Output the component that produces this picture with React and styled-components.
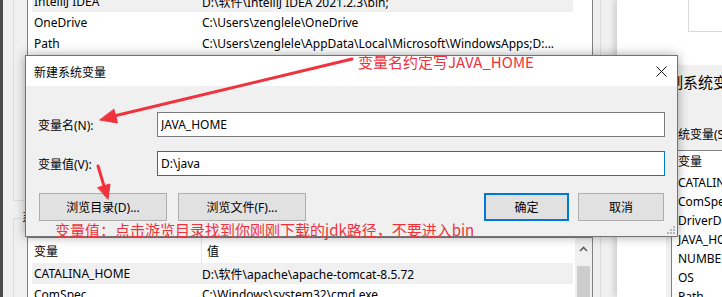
import React from 'react';
import styled, { createGlobalStyle } from 'styled-components';

const UI_FONT = '"Noto Sans", "Noto Sans CJK SC", sans-serif';
const CJK_FONT = '"Noto Sans CJK SC", "Noto Sans", sans-serif';
const RED = '#f0323c';

const GlobalStyle = createGlobalStyle`
  body {
    margin: 0;
    background: #4b4b4b;
  }
`;

const Desktop = styled.div`
  position: relative;
  width: 722px;
  height: 297px;
  overflow: hidden;
  background: #4b4b4b;
  font-family: ${UI_FONT};
  font-size: 12px;
  color: #000;
`;

/* ---------- back window: environment variables ---------- */

const BackWindow = styled.div`
  position: absolute;
  left: 3px;
  top: -60px;
  width: 614px;
  height: 357px;
  box-sizing: border-box;
  padding: 0 16px 0 10px;
  background: #f0f0f0;
  display: flex;
  flex-direction: column;
`;

const UserGroup = styled.div`
  height: 261px;
  flex-shrink: 0;
  box-sizing: border-box;
  border: 1px solid #dcdcdc;
  border-top: none;
  padding: 24px 7px 0 13px;
  display: flex;
  flex-direction: column;
`;

const GroupHead = styled.div`
  display: flex;
  align-items: center;
  flex-shrink: 0;
  height: 16px;
  margin-top: 9px;
`;

const Tick = styled.div`
  width: 8px;
  height: 8px;
  align-self: flex-end;
  border-top: 1px solid #dcdcdc;
  border-left: 1px solid #dcdcdc;
  box-sizing: border-box;
`;

const Legend = styled.span`
  padding: 0 2px 0 1px;
  white-space: nowrap;
  line-height: 16px;
`;

const Rule = styled.div`
  flex: 1;
  height: 1px;
  background: #dcdcdc;
`;

const SystemGroup = styled.div`
  flex: 1;
  min-height: 0;
  overflow: hidden;
  display: flex;
  flex-direction: column;
  border-left: 1px solid #dcdcdc;
  border-right: 1px solid #dcdcdc;
  padding: 11px 7px 0 13px;
`;

const List = styled.div`
  background: #fff;
  border: 1px solid #828282;
  display: flex;
  flex-shrink: 0;
  height: ${p => p.h}px;
`;

const ListMain = styled.div`
  flex: 1;
  display: flex;
  flex-direction: column;
  min-width: 0;
`;

const ListHeader = styled.div`
  display: flex;
  align-items: center;
  height: ${p => p.h}px;
  flex-shrink: 0;
  margin-left: 4px;
  padding-left: 2px;
`;

const HeadCell = styled.div`
  width: ${p => (p.first ? '161px' : 'auto')};
  padding-right: ${p => (p.first ? '6px' : 0)};
  border-right: ${p => (p.first ? '1px solid #e5e5e5' : 'none')};
  margin-right: ${p => (p.first ? '5px' : 0)};
  height: 100%;
  display: flex;
  align-items: center;
  white-space: nowrap;
`;

const Row = styled.div`
  display: flex;
  align-items: center;
  flex-shrink: 0;
  height: 21px;
  width: 541px;
  margin-left: 4px;
  padding-left: 2px;
  box-sizing: border-box;
  background: ${p => (p.selected ? '#f0f0f0' : 'transparent')};
`;

const Cell = styled.div`
  width: ${p => (p.first ? '168px' : 'auto')};
  flex: ${p => (p.first ? 'none' : 1)};
  white-space: nowrap;
  overflow: hidden;
`;

const ScrollBar = styled.div`
  width: 17px;
  background: #f0f0f0;
  display: flex;
  flex-direction: column;
  align-items: center;
`;

const ScrollButton = styled.div`
  height: 22px;
  display: flex;
  align-items: center;
  justify-content: center;
`;

const Thumb = styled.div`
  width: 13px;
  flex: 1;
  margin-top: 6px;
  background: #cdcdcd;
`;

const Spacer = styled.div`
  width: 18px;
`;

/* ---------- right window ---------- */

const RightWindow = styled.div`
  position: absolute;
  left: 617px;
  top: 0;
  width: 110px;
  height: 297px;
  background: #fff;
  box-shadow: -3px 0 6px rgba(0, 0, 0, 0.14);
  display: flex;
`;

const RightMargin = styled.div`
  width: 49px;
  flex-shrink: 0;
`;

const RightPanel = styled.div`
  flex: 1;
  display: flex;
  flex-direction: column;
  min-width: 0;
`;

const RightTop = styled.div`
  height: 65px;
  flex-shrink: 0;
`;

const PreviewBox = styled.div`
  margin: -1px 0 0 22px;
  height: 33px;
  border: 1px solid #dadada;
  box-sizing: border-box;
  background: #fff;
`;

const RightBody = styled.div`
  flex: 1;
  background: #f0f0f0;
  padding-top: 7px;
  display: flex;
  flex-direction: column;
`;

const RightTitle = styled.div`
  font-family: ${CJK_FONT};
  font-size: 15px;
  line-height: 20px;
  padding-left: 2px;
  white-space: nowrap;
`;

const RightLabel = styled.div`
  margin-top: 35px;
  line-height: 16px;
  white-space: nowrap;
`;

const SideList = styled.div`
  margin: 7px 0 0 5px;
  flex: 1;
  background: #fff;
  border-top: 1px solid #828282;
  border-left: 1px solid #828282;
  padding-left: 6px;
`;

const SideHead = styled.div`
  height: 22px;
  line-height: 22px;
  white-space: nowrap;
`;

const SideRow = styled.div`
  height: 19px;
  line-height: 19px;
  white-space: nowrap;
`;

/* ---------- dialog ---------- */

const Dialog = styled.div`
  position: absolute;
  left: 25px;
  top: 55px;
  width: 653px;
  height: 182px;
  box-sizing: border-box;
  border: 1px solid #737373;
  background: #f0f0f0;
  box-shadow: 0 0 10px rgba(0, 0, 0, 0.35);
  display: flex;
  flex-direction: column;
`;

const TitleBar = styled.div`
  height: 30px;
  background: #fff;
  display: flex;
  align-items: center;
  justify-content: space-between;
  padding-left: 8px;
`;

const TitleText = styled.span`
  font-family: ${CJK_FONT};
  font-size: 12px;
`;

const CloseButton = styled.div`
  width: 32px;
  height: 30px;
  display: flex;
  align-items: center;
  justify-content: center;
`;

const DialogBody = styled.div`
  padding: 26px 12px 0;
  display: flex;
  flex-direction: column;
`;

const Field = styled.div`
  display: flex;
  align-items: center;
  height: 25px;
  & + & {
    margin-top: 14px;
  }
`;

const FieldLabel = styled.label`
  width: 119px;
  flex-shrink: 0;
  white-space: nowrap;
`;

const TextBox = styled.input`
  width: 508px;
  height: 25px;
  box-sizing: border-box;
  border: 1px solid ${p => (p.focused ? '#0078d7' : '#7a7a7a')};
  padding: 0 3px;
  margin: 0;
  font-family: ${UI_FONT};
  font-size: 12px;
  color: #000;
  background: #fff;
  outline: none;
`;

const ButtonRow = styled.div`
  margin-top: 17px;
  display: flex;
  justify-content: space-between;
  padding: 0 1px;
`;

const ButtonGroup = styled.div`
  display: flex;
  gap: ${p => p.gap}px;
`;

const Button = styled.button`
  width: ${p => p.w}px;
  height: 28px;
  box-sizing: border-box;
  margin: 0;
  padding: 0;
  background: #e1e1e1;
  border: ${p => (p.primary ? '2px solid #0078d7' : '1px solid #adadad')};
  font-family: ${UI_FONT};
  font-size: 12px;
  color: #000;
`;

const Grip = styled.svg`
  position: absolute;
  right: 2px;
  bottom: 2px;
`;

/* ---------- annotations ---------- */

const Note = styled.div`
  position: absolute;
  left: ${p => p.x}px;
  top: ${p => p.y}px;
  font-family: ${CJK_FONT};
  font-size: 15px;
  line-height: 18px;
  color: ${RED};
  white-space: nowrap;
`;

const Arrows = styled.svg`
  position: absolute;
  left: 0;
  top: 0;
  pointer-events: none;
`;

const userVars = [
  ['IntelliJ IDEA', 'D:\\软件\\IntelliJ IDEA 2021.2.3\\bin;', true],
  ['OneDrive', 'C:\\Users\\zenglele\\OneDrive'],
  ['Path', 'C:\\Users\\zenglele\\AppData\\Local\\Microsoft\\WindowsApps;D:...'],
  ['TEMP', 'C:\\Users\\zenglele\\AppData\\Local\\Temp'],
  ['TMP', 'C:\\Users\\zenglele\\AppData\\Local\\Temp'],
];

const sysVars = [
  ['CATALINA_HOME', 'D:\\软件\\apache\\apache-tomcat-8.5.72', true],
  ['ComSpec', 'C:\\Windows\\system32\\cmd.exe'],
  ['DriverData', 'C:\\Windows\\System32\\Drivers\\DriverData'],
];

const sideVars = ['CATALINA_HOME', 'ComSpec', 'DriverData', 'JAVA_HOME', 'NUMBER_OF_PROCESSORS', 'OS', 'Path'];

export default function App() {
  return (
    <>
      <GlobalStyle />
      <Desktop>
        <BackWindow>
          <UserGroup>
            <List h={200}>
              <ListMain>
                <ListHeader h={26}>
                  <HeadCell first>变量</HeadCell>
                  <HeadCell>值</HeadCell>
                </ListHeader>
                {userVars.map(([k, v, sel]) => (
                  <Row key={k} selected={sel}>
                    <Cell first>{k}</Cell>
                    <Cell>{v}</Cell>
                  </Row>
                ))}
              </ListMain>
              <Spacer />
            </List>
          </UserGroup>

          <GroupHead>
            <Tick />
            <Legend>系统变量(S)</Legend>
            <Rule />
          </GroupHead>
          <SystemGroup>
            <List h={120}>
              <ListMain>
                <ListHeader h={25}>
                  <HeadCell first>变量</HeadCell>
                  <HeadCell>值</HeadCell>
                </ListHeader>
                {sysVars.map(([k, v, sel]) => (
                  <Row key={k} selected={sel}>
                    <Cell first>{k}</Cell>
                    <Cell>{v}</Cell>
                  </Row>
                ))}
              </ListMain>
              <ScrollBar>
                <ScrollButton>
                  <svg width="9" height="6" viewBox="0 0 9 6">
                    <path d="M1 5 L4.5 1.5 L8 5" fill="none" stroke="#606060" strokeWidth="1.6" />
                  </svg>
                </ScrollButton>
                <Thumb />
              </ScrollBar>
            </List>
          </SystemGroup>
        </BackWindow>

        <RightWindow>
          <RightMargin />
          <RightPanel>
            <RightTop>
              <PreviewBox />
            </RightTop>
            <RightBody>
              <RightTitle>制系统变量</RightTitle>
              <RightLabel>系统变量(S)</RightLabel>
              <SideList>
                <SideHead>变量</SideHead>
                {sideVars.map(k => (
                  <SideRow key={k}>{k}</SideRow>
                ))}
              </SideList>
            </RightBody>
          </RightPanel>
        </RightWindow>

        <Dialog>
          <TitleBar>
            <TitleText>新建系统变量</TitleText>
            <CloseButton>
              <svg width="11" height="11" viewBox="0 0 11 11">
                <path d="M0.5 0.5 L10.5 10.5 M10.5 0.5 L0.5 10.5" stroke="#111" strokeWidth="1" />
              </svg>
            </CloseButton>
          </TitleBar>
          <DialogBody>
            <Field>
              <FieldLabel>变量名(N):</FieldLabel>
              <TextBox defaultValue="JAVA_HOME" />
            </Field>
            <Field>
              <FieldLabel>变量值(V):</FieldLabel>
              <TextBox focused defaultValue="D:\java" />
            </Field>
            <ButtonRow>
              <ButtonGroup gap={11}>
                <Button w={128}>浏览目录(D)...</Button>
                <Button w={128}>浏览文件(F)...</Button>
              </ButtonGroup>
              <ButtonGroup gap={9}>
                <Button w={85} primary>确定</Button>
                <Button w={86}>取消</Button>
              </ButtonGroup>
            </ButtonRow>
          </DialogBody>
          <Grip width="9" height="9" viewBox="0 0 9 9">
            <g fill="#b5b5b5">
              <rect x="7" y="1" width="2" height="2" />
              <rect x="4" y="4" width="2" height="2" />
              <rect x="7" y="4" width="2" height="2" />
              <rect x="1" y="7" width="2" height="2" />
              <rect x="4" y="7" width="2" height="2" />
              <rect x="7" y="7" width="2" height="2" />
            </g>
          </Grip>
        </Dialog>

        <Note x={358} y={53}>变量名约定写JAVA_HOME</Note>
        <Note x={55} y={221}>变量值：点击游览目录找到你刚刚下载的jdk路径，不要进入bin</Note>

        <Arrows width="722" height="297" viewBox="0 0 722 297">
          <g fill={RED} stroke={RED} strokeLinecap="round">
            <line x1="352" y1="59" x2="114" y2="116" strokeWidth="3" />
            <polygon points="100,120 117.5,123 114,109.5" strokeWidth="1" />
            <line x1="98" y1="166" x2="104" y2="186" strokeWidth="3" />
            <polygon points="108,199 110,184 98,187.5" strokeWidth="1" />
          </g>
        </Arrows>
      </Desktop>
    </>
  );
}
